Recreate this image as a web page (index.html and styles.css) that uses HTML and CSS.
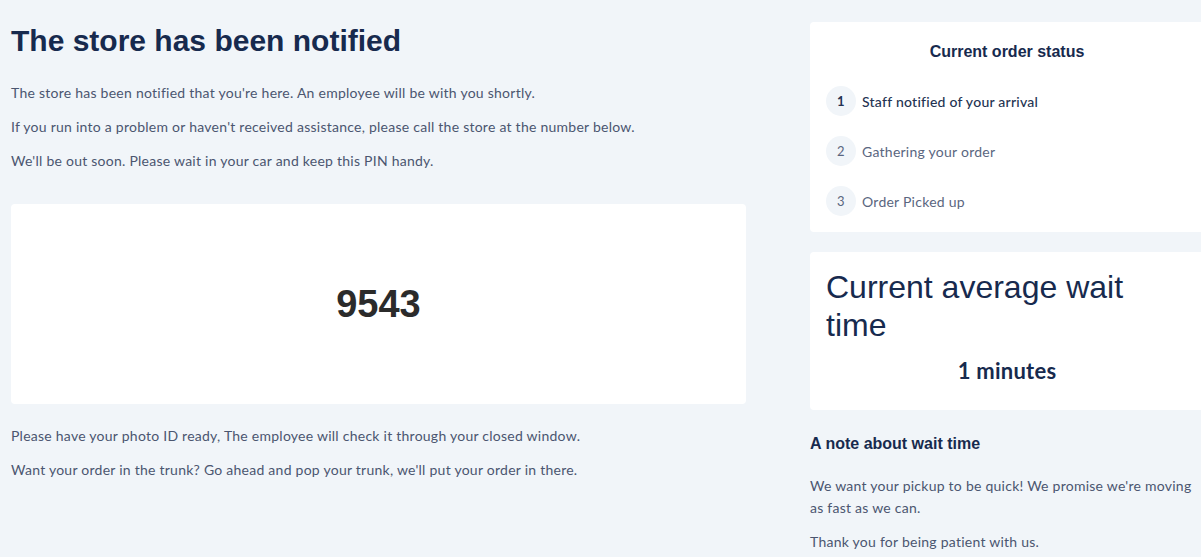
FILE: index.html
```html
<!DOCTYPE html>
<html lang="en">
<head>
  <meta charset="UTF-8">
  <meta name="viewport" content="width=device-width, initial-scale=1.0">
  <title>Store notified</title>
  <link rel="stylesheet" href="styles.css">
</head>
<body>
  <div class="page">
    <main class="main-col">
      <h1 class="page-title">The store has been notified</h1>
      <p>The store has been notified that you're here. An employee will be with you shortly.</p>
      <p>If you run into a problem or haven't received assistance, please call the store at the number below.</p>
      <p>We'll be out soon. Please wait in your car and keep this PIN handy.</p>

      <div class="pin-card">
        <span class="pin">9543</span>
      </div>

      <p>Please have your photo ID ready, The employee will check it through your closed window.</p>
      <p>Want your order in the trunk? Go ahead and pop your trunk, we'll put your order in there.</p>
    </main>

    <aside class="side-col">
      <div class="card status-card">
        <h2 class="card-title">Current order status</h2>
        <ol class="steps">
          <li class="step active"><span class="step-num">1</span>Staff notified of your arrival</li>
          <li class="step"><span class="step-num">2</span>Gathering your order</li>
          <li class="step"><span class="step-num">3</span>Order Picked up</li>
        </ol>
      </div>

      <div class="card wait-card">
        <h2 class="wait-title">Current average wait time</h2>
        <div class="wait-value">1 minutes</div>
      </div>

      <div class="note">
        <h3 class="note-title">A note about wait time</h3>
        <p>We want your pickup to be quick! We promise we're moving as fast as we can.</p>
        <p>Thank you for being patient with us.</p>
      </div>
    </aside>
  </div>
</body>
</html>
```

FILE: styles.css
```css
* {
  margin: 0;
  padding: 0;
  box-sizing: border-box;
}

html, body {
  background-color: #f1f5f9;
  overflow-x: hidden;
}

body {
  font-family: Lato, "Open Sans", sans-serif;
  font-size: 14px;
  letter-spacing: 0.25px;
  color: #4b5670;
}

.page {
  display: flex;
  gap: 64px;
  padding: 23px 0 0 11px;
  width: 1215px;
}

.main-col {
  width: 735px;
  flex-shrink: 0;
}

.page-title {
  font-family: "Liberation Sans", Arial, sans-serif;
  font-size: 30px;
  font-weight: 700;
  letter-spacing: 0;
  color: #172a4e;
  line-height: 38px;
  margin: -1px 0 23px;
}

.main-col p {
  line-height: 20px;
  margin-bottom: 14px;
}

.pin-card {
  background: #fff;
  border-radius: 4px;
  height: 200px;
  display: flex;
  align-items: center;
  justify-content: center;
  margin: 33px 0 22px;
}

.pin {
  font-family: "Liberation Sans", Arial, sans-serif;
  font-size: 38px;
  font-weight: 700;
  letter-spacing: 0;
  color: #2b2b2b;
}

.side-col {
  width: 394px;
  flex-shrink: 0;
  margin-top: -1px;
}

.card {
  background: #fff;
  border-radius: 4px;
}

.status-card {
  padding: 21px 16px 16px;
  height: 210px;
}

.card-title {
  font-family: "Liberation Sans", Arial, sans-serif;
  font-size: 16px;
  font-weight: 700;
  letter-spacing: 0;
  color: #172a4e;
  text-align: center;
  line-height: 18px;
  margin-bottom: 25px;
}

.steps {
  list-style: none;
  display: flex;
  flex-direction: column;
  gap: 20px;
}

.step {
  display: flex;
  align-items: center;
  gap: 6px;
  color: #5a6680;
}

.step.active {
  color: #243352;
  font-weight: 500;
}

.step.active .step-num {
  font-weight: 700;
}

.step-num {
  width: 30px;
  height: 30px;
  border-radius: 50%;
  background: #f1f5f9;
  display: flex;
  align-items: center;
  justify-content: center;
  font-size: 13px;
}

.wait-card {
  margin-top: 20px;
  height: 158px;
  padding: 16px 16px 0;
}

.wait-title {
  font-family: "Liberation Sans", Arial, sans-serif;
  font-size: 32px;
  font-weight: 400;
  letter-spacing: 0;
  color: #172a4e;
  line-height: 38px;
  width: 320px;
}

.wait-value {
  text-align: center;
  font-size: 22px;
  font-weight: 700;
  color: #172a4e;
  margin-top: 13px;
}

.note {
  padding-top: 25px;
}

.note-title {
  font-family: "Liberation Sans", Arial, sans-serif;
  font-size: 16px;
  font-weight: 700;
  letter-spacing: 0;
  color: #172a4e;
  margin-bottom: 22px;
}

.note p {
  line-height: 22px;
  margin-bottom: 12px;
}
```
